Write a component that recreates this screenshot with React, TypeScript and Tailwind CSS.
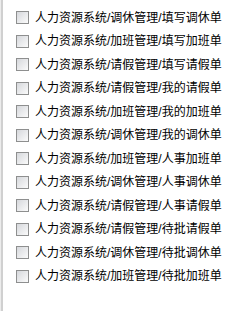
const items = [
  "人力资源系统/调休管理/填写调休单",
  "人力资源系统/加班管理/填写加班单",
  "人力资源系统/请假管理/填写请假单",
  "人力资源系统/请假管理/我的请假单",
  "人力资源系统/加班管理/我的加班单",
  "人力资源系统/调休管理/我的调休单",
  "人力资源系统/加班管理/人事加班单",
  "人力资源系统/调休管理/人事调休单",
  "人力资源系统/请假管理/人事请假单",
  "人力资源系统/请假管理/待批请假单",
  "人力资源系统/调休管理/待批调休单",
  "人力资源系统/加班管理/待批加班单",
];

function Box() {
  return (
    <span className="block w-[13px] h-[13px] border border-[#8e8f8f] bg-gradient-to-br from-[#d6d8dc] to-[#fbfbfb] shrink-0" />
  );
}

export default function App() {
  return (
    <div className="w-[251px] h-[311px] bg-white flex overflow-hidden font-['Liberation_Sans','Noto_Sans_CJK_SC',sans-serif]">
      <div className="w-[1px] bg-[#ececec]" />
      <div className="w-[2px] bg-[#d0d0d0]" />
      <div className="flex flex-col pt-[6px] pl-[13px]">
        {items.map((t, i) => (
          <div key={i} className="flex items-center h-[23.5px] gap-[6px]">
            <Box />
            <span className="text-[12px] text-black whitespace-nowrap leading-none">{t}</span>
          </div>
        ))}
      </div>
    </div>
  );
}
